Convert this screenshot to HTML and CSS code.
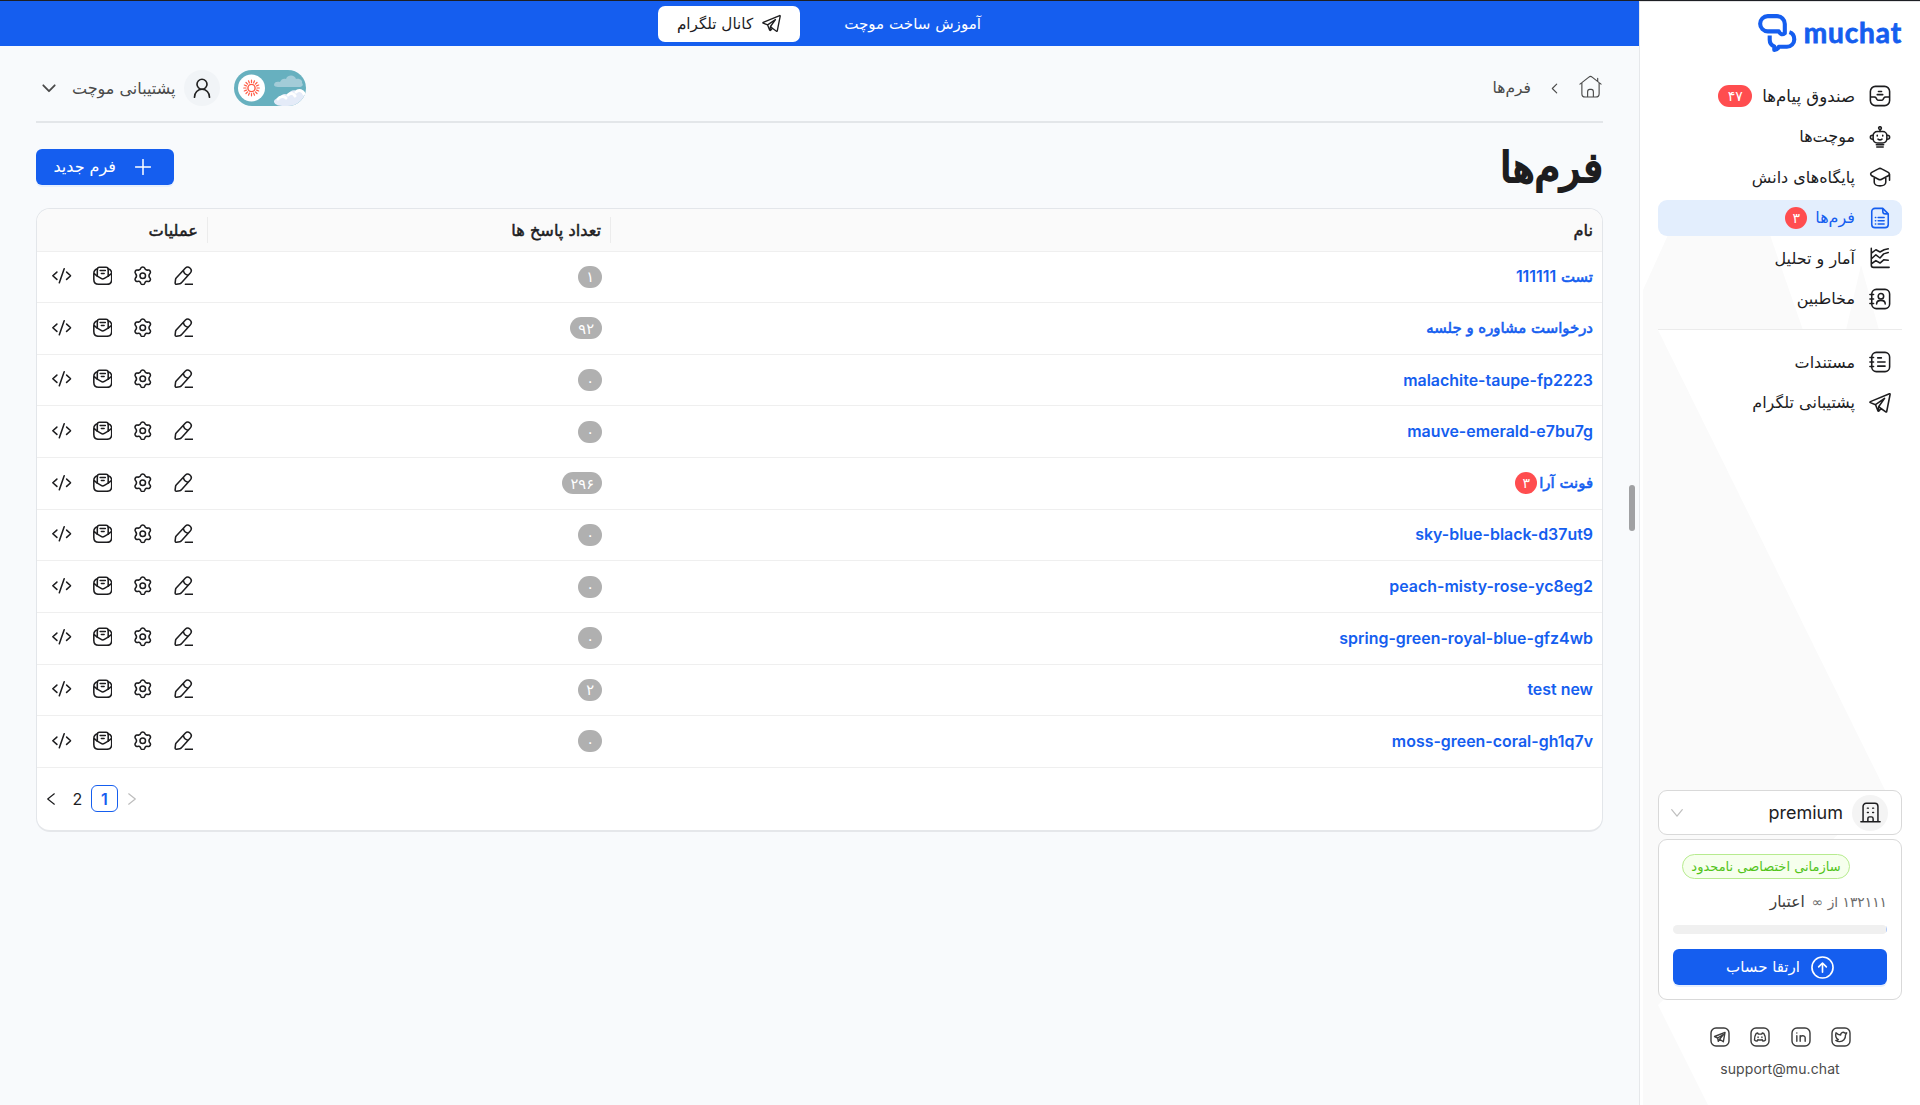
FILE: index.html
```html
<!DOCTYPE html>
<html lang="fa" dir="rtl">
<head>
<meta charset="utf-8">
<title>فرم‌ها</title>
<link rel="stylesheet" href="styles.css">
</head>
<body>
<svg class="defs" aria-hidden="true">
  <symbol id="inbox" viewBox="0 0 24 24"><rect x="1.500" y="1.500" width="21" height="21" rx="5.500"/><path d="M2 13h3.800c.8 0 1.500.4 1.900 1.100l.9 1.500c.4.700 1.100 1 1.900 1h3c.8 0 1.500-.3 1.900-1l.9-1.500c.4-.7 1.100-1.100 1.900-1.100H22M10.300 7h3.400M9 10.500h6"/></symbol>
  <symbol id="bot" viewBox="0 0 24 24"><circle cx="12" cy="2.300" r="1.500"/><path d="M12 4v2M8.500 23h7M8 20.500h8"/><rect x="4.500" y="6" width="15" height="12.500" rx="4.500"/><path d="M4 10c-2 0-2.500 1-2.500 2.300S2 14.500 4 14.500M20 10c2 0 2.500 1 2.500 2.300s-.5 2.200-2.500 2.200M9 10v1M15 10v1M9.800 14.300c1.300 1 3.100 1 4.400 0"/></symbol>
  <symbol id="cap" viewBox="0 0 24 24"><path d="M10.200 3.100 3 7c-1.600.9-1.600 2.700 0 3.600l7.200 3.900c1.200.7 2.400.7 3.600 0L21 10.600c1.600-.9 1.600-2.700 0-3.600l-7.200-3.900c-1.200-.7-2.400-.7-3.600 0ZM5.700 12v5.700c0 2.300 2.800 4 6.300 4s6.300-1.700 6.300-4V12M22.400 9v6.500"/></symbol>
  <symbol id="form" viewBox="0 0 24 24"><path d="M15 1.500H6.500A3.500 3.500 0 0 0 3 5v14a3.500 3.500 0 0 0 3.500 3.500h11A3.500 3.500 0 0 0 21 19V7.500ZM15 1.500v3a3 3 0 0 0 3 3h3M10 11.500h6.500M10 15h6.500M10 18.500h6.500M7 11.500h.3M7 15h.3M7 18.500h.3"/></symbol>
  <symbol id="chart" viewBox="0 0 24 24"><path d="M2.500 1.500v18c0 2 .7 2.700 2.500 2.700h17M3 6.500l4.500-3.500 4.500 2.500 4.500-2.500 4.500-1M3 12.500l4.500-4 4.500 3.500 4-4.500 5-1.500M3 18l4.500-3.200 4.500 2.700 4-3.500 5 .5"/></symbol>
  <symbol id="contact" viewBox="0 0 24 24"><rect x="3" y="1.500" width="19.500" height="21" rx="5"/><circle cx="13" cy="9" r="3"/><path d="M8.300 17.500c0-2.600 2-4 4.700-4s4.700 1.400 4.700 4M1 7h4M1 12h4M1 17h4"/></symbol>
  <symbol id="notes" viewBox="0 0 24 24"><rect x="3" y="1.500" width="19.500" height="21" rx="5"/><path d="M1 7h4M1 12h4M1 17h4M9.500 7.500h4M9.500 12h8M9.500 16.500h8"/></symbol>
  <symbol id="plane" viewBox="0 0 24 24"><path d="M22.300 2 1.500 10.500c-.6.300-.6.900 0 1.100l5.600 2.200 2.600 6.600c.2.600.8.600 1.200.2l2.200-2.600 5.200 3.700c.4.300.9.100 1-.4L23 2.700c.1-.6-.2-.9-.7-.7ZM7.100 13.800 17 7l-6.300 8.800-.7 4.800M10.700 15.800l2.400 2.200"/></symbol>
  <symbol id="building" viewBox="0 0 24 24"><path d="M1 22.500h22M3.500 22.500V5A3.500 3.500 0 0 1 7 1.500h10A3.500 3.500 0 0 1 20.500 5v17.500M9 22.500V19c0-1.300.7-2 2-2h2c1.300 0 2 .7 2 2v3.500M8.500 7h1M14.500 7h1M8.500 12h1M14.500 12h1"/></symbol>
  <symbol id="home" viewBox="0 0 24 24"><path d="M1 9.500 10.300 2.200c1-.8 2.400-.8 3.400 0L23 9.500M3 8v11.500C3 21.500 4.200 23 6.500 23h11c2.300 0 3.500-1.500 3.500-3.500V8M19.500 6.500v-3M9 23v-5.500C9 16 9.800 15 11.200 15h1.600c1.400 0 2.200 1 2.200 2.500V23"/></symbol>
  <symbol id="user" viewBox="0 0 24 24"><circle cx="12" cy="7.500" r="6"/><path d="M3 23c0-5.500 4-9.500 9-9.500s9 4 9 9.500"/></symbol>
  <symbol id="pen" viewBox="0 0 24 24"><path d="M13.800 2.700 2.700 14.800c-.4.500-.7 1.200-.8 1.800l-.5 4.200c-.1 1.100.6 1.800 1.700 1.600l4-.6c.7-.1 1.400-.6 1.800-1L20 8.700c1.700-2 1.900-4.200-.4-6.200-2.200-2-4.100-1.500-5.800.2ZM11.500 5.300c.6 3.200 3 5.500 6 6M14 22.500h9.500"/></symbol>
  <symbol id="gear" viewBox="0 0 24 24"><circle cx="12" cy="12" r="3.400"/><path d="M9.700 2.500c.6-1.700 4-1.700 4.600 0 .7 2.400 2 3.100 4.400 2.400 1.800-.5 3.600 2.500 2.400 3.900-1.700 1.900-1.700 4.500 0 6.400 1.200 1.400-.6 4.400-2.400 3.900-2.400-.7-3.700 0-4.400 2.400-.6 1.700-4 1.700-4.600 0-.7-2.400-2-3.100-4.400-2.400-1.800.5-3.600-2.500-2.400-3.900 1.700-1.900 1.700-4.500 0-6.400C1.700 7.400 3.500 4.400 5.300 4.900c2.400.7 3.700 0 4.400-2.400Z"/></symbol>
  <symbol id="mail" viewBox="0 0 24 24"><path d="M5.500 3.500C2.500 4.200 1 6.200 1 9.500v7c0 4 2 6 6 6h10c4 0 6-2 6-6v-7c0-3.300-1.500-5.300-4.500-6M1.500 9.500l3.800 3M22.500 9.500l-3.800 3"/><path d="M8 1.500h8c1.700 0 2.700 1 2.700 2.700v8.300L14 15.300c-1.200.8-2.800.8-4 0l-4.700-2.800V4.200C5.300 2.500 6.300 1.500 8 1.500ZM8.800 5.500h6.400M10.300 9.300h3.400"/></symbol>
  <symbol id="code" viewBox="0 0 24 24"><path d="M6 7.500 1 12l5 4.500M18 7.500l5 4.500-5 4.500M15 3.500 9 20.500"/></symbol>
  <symbol id="up" viewBox="0 0 24 24"><circle cx="12" cy="12" r="11"/><path d="M12 17V7.500M8 11.300l4-4 4 4"/></symbol>
  <symbol id="twitter" viewBox="0 0 24 24"><rect x="1.200" y="1.200" width="21.600" height="21.600" rx="6"/><path d="M6 7c1.500 1.700 3.400 2.600 5.600 2.600-.3-2.800 3-4.300 4.900-2.300L18.800 7l-1.400 2.600c.3 4.600-3 7.900-7 7.900-1.800 0-3.300-.4-4.600-1.300 1.300 0 2.300-.3 3-1C6 13.500 5 10.500 6 7Z"/></symbol>
  <symbol id="linkedin" viewBox="0 0 24 24"><rect x="1.200" y="1.200" width="21.600" height="21.600" rx="6"/><path d="M7 10.500V17M7 7v.3M11 17v-6.500M11 13c0-3.300 6-3.500 6 0v4"/></symbol>
  <symbol id="discord" viewBox="0 0 24 24"><rect x="1.200" y="1.200" width="21.600" height="21.600" rx="6"/><path d="M9.300 7.200 7.500 7.700C6 10 5.300 12.500 5.400 15.500c1 .9 2 1.300 3 1.500l.9-1.700c1.800.4 3.600.4 5.400 0l.9 1.700c1-.2 2-.6 3-1.500.1-3-.6-5.500-2.100-7.800l-1.800-.5-.7 1.300h-4ZM9.700 12v.5M14.300 12v.5"/></symbol>
  <symbol id="telegram" viewBox="0 0 24 24"><rect x="1.200" y="1.200" width="21.600" height="21.600" rx="6"/><path d="M18 6.500 5.500 11.400l3.700 1.800L16 9l-4.500 5.700 4.500 3 2-11.200ZM9.200 13.200l.8 4 1.500-2.500"/></symbol>
</svg>

<aside class="sidebar">
  <svg class="facets" viewBox="0 0 280 1105" preserveAspectRatio="none"><path d="M3 290 28 235H130L163 330H18L245 790 18 1005l50 100H3ZM206 330l15-65 18 65Z"/></svg>
  <div class="logo">
    <svg class="logo-mark" viewBox="0 0 40 40"><path d="M10 2.200h9.500a8 8 0 0 1 8 8v9.500c-2.200 1.800-4.600 1.500-6.200-1.900H10A7.800 7.800 0 0 1 10 2.200Z"/><path d="M12 22v4.500c0 3.500 1.500 5.600 4.700 6.700V37c2.600-.3 4-1.700 4.700-3.400h8.300a7.500 7.500 0 0 0 7.500-7.500c0-3.800-1.800-6.500-5-7.500"/></svg>
    <span class="logo-text" dir="ltr">muchat</span>
  </div>
  <nav class="menu">
    <a class="item"><svg><use href="#inbox"/></svg><span class="inbox-label">صندوق پیام‌ها</span><b class="badge wide">۴۷</b></a>
    <a class="item"><svg><use href="#bot"/></svg><span>موچت‌ها</span></a>
    <a class="item"><svg><use href="#cap"/></svg><span>پایگاه‌های دانش</span></a>
    <a class="item active"><svg><use href="#form"/></svg><span>فرم‌ها</span><b class="badge">۳</b></a>
    <a class="item"><svg><use href="#chart"/></svg><span>آمار و تحلیل</span></a>
    <a class="item"><svg><use href="#contact"/></svg><span>مخاطبین</span></a>
  </nav>
  <nav class="menu second">
    <a class="item"><svg><use href="#notes"/></svg><span>مستندات</span></a>
    <a class="item"><svg><use href="#plane"/></svg><span>پشتیبانی تلگرام</span></a>
  </nav>
  <div class="bottom">
    <div class="org"><span class="org-icon"><svg><use href="#building"/></svg></span><span class="org-name">premium</span><svg class="caret" viewBox="0 0 12 8"><path d="M.7.700 6 7.200 11.300.700"/></svg></div>
    <div class="plan">
      <span class="plan-tag">سازمانی اختصاصی نامحدود</span>
      <div class="credit"><span class="amount">۱۳۲۱۱۱ از ∞</span><span class="unit">اعتبار</span></div>
      <div class="progress"><i></i></div>
      <button class="upgrade"><svg><use href="#up"/></svg><span>ارتقا حساب</span></button>
    </div>
    <div class="social"><svg><use href="#twitter"/></svg><svg><use href="#linkedin"/></svg><svg><use href="#discord"/></svg><svg><use href="#telegram"/></svg></div>
    <div class="support" dir="ltr">support@mu.chat</div>
  </div>
</aside>

<main class="main">
  <div class="banner"><span class="learn">آموزش ساخت موچت</span><a class="channel"><svg><use href="#plane"/></svg><span>کانال تلگرام</span></a></div>
  <div class="content">
    <header class="topbar">
      <div class="crumbs"><svg class="home"><use href="#home"/></svg><svg class="sep" viewBox="0 0 8 12"><path d="M6.500 1 1.500 6l5 5"/></svg><span>فرم‌ها</span></div>
      <div class="account">
        <svg class="toggle" viewBox="0 0 72 36"><defs><clipPath id="pill"><rect width="72" height="36" rx="18"/></clipPath></defs><g clip-path="url(#pill)"><rect width="72" height="36" fill="#67b0bf"/><path d="M40 15c0-3 3-4 6-3 1-3 4-4 6-3 2-5 9-4 10 0 4-1 7 2 6 4 2 2 0 4-3 4H44c-2 0-4-1-4-2Z" fill="#a3ccd8"/><path d="M40 32c0-3 3-4 6-4 1-4 5-5 8-3 1-5 8-6 9-3 4-3 8-1 9 2v12H50c-5 0-9-1-10-4Z" fill="#e4ebf8"/><path d="M44 29c2-3 6-3 8-1M54 25c3-3 6-1 7 1M62 22c3-3 7-1 8 2" fill="none" stroke="#fff" stroke-width="3" stroke-linecap="round"/></g><circle cx="17.500" cy="18" r="13.500" fill="#fff"/><circle cx="17.500" cy="18" r="3.600" fill="none" stroke="#ff5a43" stroke-width="1.400"/><path d="M17.500 12.500v-2.300M17.500 23.500v2.300M12 18H9.700M23 18h2.300M13.600 14.100 12 12.500M21.400 14.100l1.600-1.600M13.600 21.900 12 23.500M21.400 21.900l1.600 1.600M15.400 12.900l-.9-2.100M19.600 12.900l.9-2.100M15.400 23.100l-.9 2.100M19.600 23.100l.9 2.100M12.400 15.900l-2.100-.9M12.400 20.100l-2.100.9M22.600 15.900l2.100-.9M22.600 20.100l2.100.9" fill="none" stroke="#ff5a43" stroke-width="1.200"/></svg>
        <span class="avatar"><svg><use href="#user"/></svg></span>
        <span class="account-name">پشتیبانی موچت</span>
        <svg class="down" viewBox="0 0 14 9"><path d="m1.300 1.300 5.700 5.900 5.700-5.900"/></svg>
      </div>
    </header>
    <div class="heading"><h1>فرم‌ها</h1><button class="new"><svg viewBox="0 0 16 16"><path d="M8 .5v15M.5 8h15"/></svg><span>فرم جدید</span></button></div>
    <section class="table">
      <div class="row head"><div>نام</div><div>تعداد پاسخ ها</div><div>عملیات</div></div>
      <div class="row"><div class="name fa">تست <span class="num">111111</span></div><div><i class="count">۱</i></div><div class="acts"><svg><use href="#pen"/></svg><svg><use href="#gear"/></svg><svg><use href="#mail"/></svg><svg><use href="#code"/></svg></div></div>
      <div class="row"><div class="name fa">درخواست مشاوره و جلسه</div><div><i class="count">۹۲</i></div><div class="acts"><svg><use href="#pen"/></svg><svg><use href="#gear"/></svg><svg><use href="#mail"/></svg><svg><use href="#code"/></svg></div></div>
      <div class="row"><div class="name">malachite-taupe-fp2223</div><div><i class="count">۰</i></div><div class="acts"><svg><use href="#pen"/></svg><svg><use href="#gear"/></svg><svg><use href="#mail"/></svg><svg><use href="#code"/></svg></div></div>
      <div class="row"><div class="name">mauve-emerald-e7bu7g</div><div><i class="count">۰</i></div><div class="acts"><svg><use href="#pen"/></svg><svg><use href="#gear"/></svg><svg><use href="#mail"/></svg><svg><use href="#code"/></svg></div></div>
      <div class="row"><div class="name fa">فونت آرا<b class="badge">۳</b></div><div><i class="count">۲۹۶</i></div><div class="acts"><svg><use href="#pen"/></svg><svg><use href="#gear"/></svg><svg><use href="#mail"/></svg><svg><use href="#code"/></svg></div></div>
      <div class="row"><div class="name">sky-blue-black-d37ut9</div><div><i class="count">۰</i></div><div class="acts"><svg><use href="#pen"/></svg><svg><use href="#gear"/></svg><svg><use href="#mail"/></svg><svg><use href="#code"/></svg></div></div>
      <div class="row"><div class="name">peach-misty-rose-yc8eg2</div><div><i class="count">۰</i></div><div class="acts"><svg><use href="#pen"/></svg><svg><use href="#gear"/></svg><svg><use href="#mail"/></svg><svg><use href="#code"/></svg></div></div>
      <div class="row"><div class="name">spring-green-royal-blue-gfz4wb</div><div><i class="count">۰</i></div><div class="acts"><svg><use href="#pen"/></svg><svg><use href="#gear"/></svg><svg><use href="#mail"/></svg><svg><use href="#code"/></svg></div></div>
      <div class="row"><div class="name">test new</div><div><i class="count">۲</i></div><div class="acts"><svg><use href="#pen"/></svg><svg><use href="#gear"/></svg><svg><use href="#mail"/></svg><svg><use href="#code"/></svg></div></div>
      <div class="row"><div class="name">moss-green-coral-gh1q7v</div><div><i class="count">۰</i></div><div class="acts"><svg><use href="#pen"/></svg><svg><use href="#gear"/></svg><svg><use href="#mail"/></svg><svg><use href="#code"/></svg></div></div>
      <div class="pager"><svg class="prev" viewBox="0 0 8 12"><path d="m.7.800 6.600 5.200-6.600 5.200"/></svg><span class="page current">1</span><span class="page">2</span><svg class="next" viewBox="0 0 8 12"><path d="M7.300.800.700 6l6.600 5.200"/></svg></div>
    </section>
  </div>
  <div class="scroll-thumb"></div>
</main>
</body>
</html>
```
FILE: styles.css
```css
* { box-sizing: border-box; }
body {
  margin: 0;
  height: 1105px;
  display: grid;
  grid-template-columns: 281px 1fr;
  border-top: 1px solid #1d1f24;
  background: #f8fafc;
  color: #1d1d1f;
  font: 16px "DejaVu Sans", sans-serif;
  overflow: hidden;
}
svg { fill: none; stroke: currentColor; stroke-width: 1.7; stroke-linecap: round; stroke-linejoin: round; flex: none; }
.defs { position: absolute; width: 0; height: 0; }
button { border: 0; font: inherit; color: #fff; background: #155eef; }

.sidebar {
  position: relative;
  display: flex;
  flex-direction: column;
  padding: 12px 18px 0 18px;
  background: #fff;
  border-left: 1px solid #e6e8eb;
  border-top: 1px solid #e3e3e5;
}
.facets { position: absolute; inset: -2px 0 0 0; width: 280px; height: 1105px; fill: #fafafa; stroke: none; }
.logo, .menu, .bottom { position: relative; }
.logo { display: flex; direction: ltr; height: 40px; justify-content: flex-end; align-items: flex-start; color: #155eef; }
.logo-mark { width: 39px; height: 39px; stroke-width: 4.2; stroke-linecap: butt; }
.logo-text { margin-left: 7px; margin-top: 1px; font: 700 28px/34px "Lato", sans-serif; letter-spacing: .9px; -webkit-text-stroke: .8px #155eef; }
.menu { display: flex; flex-direction: column; gap: 4.5px; margin-top: 24px; }
.menu.second { margin-top: 12.5px; padding-top: 14px; border-top: 1px solid #ebebeb; }
.item { display: flex; align-items: center; height: 36px; padding-right: 11px; border-radius: 9px; white-space: nowrap; }
.item svg { width: 22px; height: 22px; margin-left: 14px; }
.item.active { background: #e3eefd; color: #155eef; }
.inbox-label { font-size: 16.6px; }
.badge { display: inline-flex; align-items: center; justify-content: center; min-width: 22px; height: 22px; border-radius: 11px; background: #ff4d4f; color: #fff; font: 14px "DejaVu Sans", sans-serif; -webkit-text-stroke: 0; }
.item .badge { margin-right: 8px; }
.item .badge.wide { min-width: 34px; margin-right: 10px; }
.bottom { margin-top: auto; height: 315px; }
.org { display: flex; align-items: center; height: 45px; padding: 0 13px 0 12px; border: 1px solid #d9d9d9; border-radius: 9px; background: #fff; }
.org-icon { display: grid; place-items: center; width: 36px; height: 36px; border-radius: 50%; background: #f4f4f4; }
.org-icon svg { width: 21px; height: 21px; }
.org-name { margin-right: 9px; font: 18px "Inter", sans-serif; }
.caret { width: 12px; height: 8px; margin-right: auto; stroke: #bfbfbf; stroke-width: 1.2; }
.plan { display: flex; flex-direction: column; height: 161px; margin-top: 4px; padding: 14px 14px 0; border: 1px solid #d9d9d9; border-radius: 9px; background: #fff; }
.plan-tag { width: 168px; height: 25px; margin-right: 37px; border: 1px solid #b7eb8f; border-radius: 13px; background: #f6ffed; color: #52c41a; text-align: center; font-size: 13px; line-height: 23px; white-space: nowrap; }
.credit { display: flex; gap: 7px; height: 24px; margin-top: 11px; line-height: 24px; white-space: nowrap; font-size: 15.5px; }
.amount { color: #6b6b6b; font-size: 13.8px; }
.unit { color: #3c3c3c; }
.progress { height: 9px; margin-top: 11px; border-radius: 5px; background: #f0f0f0; overflow: hidden; }
.progress i { display: block; width: 1px; height: 9px; background: #a9c4f8; }
.upgrade { display: flex; align-items: center; justify-content: center; gap: 11px; height: 36px; margin-top: 15px; border-radius: 6px; box-shadow: 0 2px 0 #e6effd; font-size: 15px; }
.upgrade svg { width: 23px; height: 23px; }
.social { display: flex; justify-content: center; gap: 20.5px; margin: 27px 0 0 1px; color: #3c3c3c; }
.social svg { width: 20px; height: 20px; }
.support { margin-top: 13px; text-align: center; font: 14px/18px "Inter", sans-serif; letter-spacing: .1px; color: #4b4b4b; }

.main { position: relative; min-width: 0; }
.banner { display: flex; align-items: center; height: 45px; padding-right: 658px; background: #155eef; color: #fff; }
.learn { width: 137px; white-space: nowrap; font-size: 15.1px; }
.channel { display: flex; align-items: center; justify-content: center; gap: 9px; width: 142px; height: 36px; margin-right: 44px; border-radius: 7px; background: #fff; color: #1d1d1f; font-size: 15.2px; white-space: nowrap; }
.channel svg { width: 19px; height: 19px; }
.content { padding: 0 36px; }
.topbar { display: flex; justify-content: space-between; align-items: center; height: 77px; padding-top: 9px; border-bottom: 2px solid #e3e6e9; color: #4a4a4a; }
.crumbs { display: flex; align-items: center; font-size: 15.5px; }
.home { width: 23px; height: 23px; margin: 0 1px 4px 0; stroke-width: 1.2; }
.sep { width: 7px; height: 11px; margin: 0 21px 0 20px; stroke-width: 1.3; }
.account { display: flex; align-items: center; }
.toggle { width: 72px; height: 36px; stroke: none; }
.avatar { display: grid; place-items: center; width: 36px; height: 36px; margin-right: 14px; border-radius: 50%; background: #f1f4f7; color: #222; }
.avatar svg { width: 20px; height: 20px; stroke-width: 2; }
.account-name { margin-right: 9px; white-space: nowrap; font-size: 16px; }
.down { width: 14px; height: 9px; margin: 0 16px 0 6px; stroke-width: 1.8; }
.heading { display: flex; justify-content: space-between; align-items: center; height: 85px; padding-top: 2px; }
h1 { margin: 3px 0 0; font-size: 41.5px; font-weight: 400; line-height: 60px; -webkit-text-stroke: 2.2px #1d1d1f; }
.new { display: flex; align-items: center; width: 138px; height: 36px; padding: 0 23px 0 0; border-radius: 6px; box-shadow: 0 2px 0 #e6effd; white-space: nowrap; }
.new svg { width: 16px; height: 16px; margin-left: 19px; stroke-width: 1.5; }
.table { height: 624px; border: 1px solid #e3e6ea; border-bottom: 2px solid #e5e7ea; border-radius: 14px; background: #fff; overflow: hidden; }
.row { display: grid; grid-template-columns: 991px 403px 1fr; align-items: center; height: 51.63px; border-bottom: 1px solid #efefef; }
.row > div { padding-right: 9px; }
.row.head { height: 42.5px; background: #fafafa; font-size: 16.2px; -webkit-text-stroke: .5px #1d1d1f; }
.row.head > div { height: 26px; line-height: 28px; }
.row.head > div + div { border-right: 1px solid #ececec; }
.name { color: #155eef; font: 600 15.95px "Inter", sans-serif; }
.name.fa { font: 14.9px "DejaVu Sans", sans-serif; -webkit-text-stroke: .6px #155eef; }
.num { font: 600 15.9px "Inter", sans-serif; -webkit-text-stroke: 0; }
.name .badge { margin-right: 2px; }
.count { display: inline-flex; align-items: center; justify-content: center; min-width: 23px; height: 22px; padding: 0 8px; border-radius: 11px; background: #b0b0b0; color: #fff; font: 14.6px "DejaVu Sans", sans-serif; }
.row > .acts { display: flex; gap: 21px; padding: 0 15px 2px 0; }
.acts svg { width: 19.5px; height: 19.5px; stroke-width: 1.9; }
.pager { display: flex; flex-direction: row-reverse; direction: ltr; justify-content: flex-end; align-items: center; height: 62px; padding-left: 10px; font: 16px "Inter", sans-serif; }
.pager svg { width: 8px; height: 12px; stroke-width: 1.2; }
.pager .prev { color: #bdbdbd; }
.pager .next { margin-right: 9px; }
.page { display: grid; place-items: center; width: 27px; height: 27px; }
.page.current { margin-right: 10px; border: 1px solid #155eef; border-radius: 6px; color: #155eef; font-weight: 600; }
.scroll-thumb { position: absolute; left: 1629px; top: 484px; width: 6px; height: 46px; border-radius: 3px; background: #a0a1a3; }
```
